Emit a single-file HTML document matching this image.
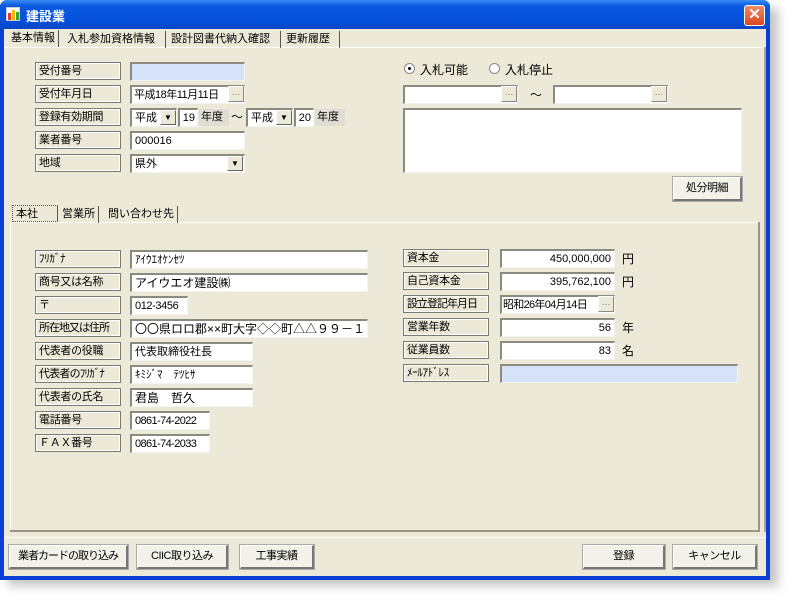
<!DOCTYPE html>
<html><head><meta charset="utf-8"><style>
*{box-sizing:border-box;margin:0;padding:0}
body{width:792px;height:600px;background:#fff;position:relative;overflow:hidden;font-family:"Liberation Sans","Noto Sans CJK JP",sans-serif;font-size:12px;color:#000}
.a{position:absolute;white-space:nowrap}
#shadow{left:8px;top:8px;width:770px;height:578px;background:#aaa;filter:blur(5px);opacity:.7}
#win{left:0;top:0;width:770px;height:580px;background:#0a3fd6;border-radius:7px 7px 0 0}
#title{left:0;top:0;width:770px;height:29px;border-radius:7px 7px 0 0;background:linear-gradient(#3d8cf5,#0a5ae0 20%,#0551dc 70%,#0a45c8)}
#client{left:4px;top:29px;width:762px;height:547px;background:#ece9d8}
.lab{position:absolute;width:86px;height:18px;border:1px solid #7a7a70;box-shadow:inset -1px -1px #fff,inset 1px 1px #fff;background:#ece9d8;padding:1px 3px;line-height:14px;font-size:11px;white-space:nowrap;overflow:hidden;letter-spacing:-0.3px}
.f{position:absolute;height:19px;background:#fff;border-top:2px solid #8a8a80;border-left:2px solid #8a8a80;border-right:1px solid #f4f3ee;border-bottom:1px solid #f4f3ee;padding:0 3px;line-height:16px;font-size:11px;white-space:nowrap;overflow:hidden}
.r{text-align:right}
.blue{background:#d6e2f7}
.dot{position:absolute;width:16px;height:16px;background:#ece9d8;border:1px solid #fff;border-right-color:#888;border-bottom-color:#888;font-size:9px;line-height:10px;text-align:center;color:#777}
.dd{position:absolute;width:16px;height:15px;background:#ece9d8;border:1px solid #fff;border-right-color:#666;border-bottom-color:#666;font-size:8px;text-align:center;line-height:13px}
.btn{position:absolute;height:24px;background:#f2f1ea;border:1px solid #fff;border-right:2px solid #777;border-bottom:2px solid #777;outline:1px solid #aaa;text-align:center;line-height:21px;font-size:11px;white-space:nowrap;overflow:hidden;letter-spacing:-0.5px}
.tab{position:absolute;height:17px;line-height:16px;font-size:11px;border-right:1px solid #555;padding:0 3px;white-space:nowrap}
</style></head><body>
<div class="a" id="shadow"></div>
<div class="a" id="win"></div>
<div class="a" id="title"></div>
<div class="a" style="left:6px;top:7px;width:14px;height:14px;background:#fff;border:1px solid #ccc">
<div class="a" style="left:1px;top:5px;width:3px;height:7px;background:#e33"></div>
<div class="a" style="left:5px;top:2px;width:3px;height:10px;background:#fb0"></div>
<div class="a" style="left:9px;top:4px;width:3px;height:8px;background:#3a3"></div></div>
<div class="a" style="left:26px;top:6px;color:#fff;font-weight:bold;font-size:13px">建設業</div>
<div class="a" style="left:744px;top:5px;width:21px;height:21px;border:1px solid #fff;border-radius:3px;background:linear-gradient(#f08a6a,#d8461f);color:#fff;font-weight:bold;font-size:15px;text-align:center;line-height:18px">✕</div>
<div class="a" id="client"></div>
<div class="a" style="left:4px;top:47px;width:762px;height:1px;background:#fff"></div>
<div class="tab a" style="left:8px;top:30px;background:#ece9d8">基本情報</div>
<div class="tab a" style="left:64px;top:31px;width:102px">入札参加資格情報</div>
<div class="tab a" style="left:168px;top:31px;width:113px">設計図書代納入確認</div>
<div class="tab a" style="left:283px;top:31px;width:57px">更新履歴</div>
<div class="a" style="left:764px;top:47px;width:2px;height:485px;background:#aca899"></div>
<div class="lab" style="left:35px;top:62px">受付番号</div>
<div class="f blue" style="left:130px;top:62px;width:115px"></div>
<div class="lab" style="left:35px;top:85px">受付年月日</div>
<div class="f" style="left:130px;top:85px;width:115px;padding-left:2px;letter-spacing:-0.5px">平成18年11月11日</div>
<div class="dot" style="left:228px;top:86px">…</div>
<div class="lab" style="left:35px;top:108px">登録有効期間</div>
<div class="f" style="left:130px;top:108px;width:47px">平成</div>
<div class="dd" style="left:160px;top:110px">▼</div>
<div class="f r" style="left:178px;top:108px;width:20px;padding:0 2px">19</div>
<div class="a" style="left:199px;top:109px;width:30px;height:17px;background:#e0ded4;line-height:16px;padding-left:2px;font-size:11px">年度</div>
<div class="a" style="left:231px;top:108px">〜</div>
<div class="f" style="left:246px;top:108px;width:47px">平成</div>
<div class="dd" style="left:276px;top:110px">▼</div>
<div class="f r" style="left:294px;top:108px;width:20px;padding:0 2px">20</div>
<div class="a" style="left:315px;top:109px;width:30px;height:17px;background:#e0ded4;line-height:16px;padding-left:2px;font-size:11px">年度</div>
<div class="lab" style="left:35px;top:131px">業者番号</div>
<div class="f" style="left:130px;top:131px;width:115px">000016</div>
<div class="lab" style="left:35px;top:154px">地域</div>
<div class="f" style="left:130px;top:154px;width:115px">県外</div>
<div class="dd" style="left:227px;top:156px">▼</div>
<div class="a" style="left:404px;top:63px;width:11px;height:11px;border-radius:50%;background:#fff;border:1px solid #888"><div class="a" style="left:3px;top:3px;width:3px;height:3px;border-radius:50%;background:#000"></div></div>
<div class="a" style="left:420px;top:61px">入札可能</div>
<div class="a" style="left:489px;top:63px;width:11px;height:11px;border-radius:50%;background:#fff;border:1px solid #888"></div>
<div class="a" style="left:505px;top:61px">入札停止</div>
<div class="f" style="left:403px;top:85px;width:115px"></div>
<div class="dot" style="left:501px;top:86px">…</div>
<div class="a" style="left:530px;top:86px">〜</div>
<div class="f" style="left:553px;top:85px;width:115px"></div>
<div class="dot" style="left:651px;top:86px">…</div>
<div class="f" style="left:403px;top:108px;width:339px;height:65px"></div>
<div class="btn" style="left:673px;top:177px;width:69px">処分明細</div>
<div class="a" style="left:10px;top:222px;width:750px;height:1px;background:#fff"></div>
<div class="a" style="left:10px;top:222px;width:1px;height:308px;background:#fff"></div>
<div class="a" style="left:10px;top:530px;width:750px;height:2px;background:#9a9788"></div>
<div class="a" style="left:758px;top:222px;width:2px;height:310px;background:#9a9788"></div>
<div class="tab a" style="left:12px;top:205px;width:46px;border:1px dotted #555;border-right:1px solid #555">本社</div>
<div class="tab a" style="left:59px;top:206px">営業所</div>
<div class="tab a" style="left:105px;top:206px">問い合わせ先</div>
<div class="lab" style="left:35px;top:250px">ﾌﾘｶﾞﾅ</div>
<div class="f" style="left:130px;top:250px;width:238px">ｱｲｳｴｵｹﾝｾﾂ</div>
<div class="lab" style="left:35px;top:273px">商号又は名称</div>
<div class="f" style="left:130px;top:273px;width:238px;font-size:12px">アイウエオ建設㈱</div>
<div class="lab" style="left:35px;top:296px">〒</div>
<div class="f" style="left:130px;top:296px;width:58px;letter-spacing:-0.4px">012-3456</div>
<div class="lab" style="left:35px;top:319px;letter-spacing:-1px">所在地又は住所</div>
<div class="f" style="left:130px;top:319px;width:238px;font-size:12px">〇〇県ロロ郡××町大字◇◇町△△９９－１</div>
<div class="lab" style="left:35px;top:342px">代表者の役職</div>
<div class="f" style="left:130px;top:342px;width:123px">代表取締役社長</div>
<div class="lab" style="left:35px;top:365px;letter-spacing:-0.8px">代表者のﾌﾘｶﾞﾅ</div>
<div class="f" style="left:130px;top:365px;width:123px">ｷﾐｼﾞﾏ　ﾃﾂﾋｻ</div>
<div class="lab" style="left:35px;top:388px">代表者の氏名</div>
<div class="f" style="left:130px;top:388px;width:123px;font-size:12px">君島　哲久</div>
<div class="lab" style="left:35px;top:411px">電話番号</div>
<div class="f" style="left:130px;top:411px;width:80px;letter-spacing:-0.6px">0861-74-2022</div>
<div class="lab" style="left:35px;top:434px">ＦＡＸ番号</div>
<div class="f" style="left:130px;top:434px;width:80px;letter-spacing:-0.6px">0861-74-2033</div>
<div class="lab" style="left:403px;top:249px">資本金</div>
<div class="f r" style="left:500px;top:249px;width:115px">450,000,000</div>
<div class="a" style="left:622px;top:250px">円</div>
<div class="lab" style="left:403px;top:272px">自己資本金</div>
<div class="f r" style="left:500px;top:272px;width:115px">395,762,100</div>
<div class="a" style="left:622px;top:273px">円</div>
<div class="lab" style="left:403px;top:295px;letter-spacing:-1px">設立登記年月日</div>
<div class="f" style="left:500px;top:295px;width:115px;padding-left:1px;letter-spacing:-0.7px">昭和26年04月14日</div>
<div class="dot" style="left:598px;top:296px">…</div>
<div class="lab" style="left:403px;top:318px">営業年数</div>
<div class="f r" style="left:500px;top:318px;width:115px">56</div>
<div class="a" style="left:622px;top:319px">年</div>
<div class="lab" style="left:403px;top:341px">従業員数</div>
<div class="f r" style="left:500px;top:341px;width:115px">83</div>
<div class="a" style="left:622px;top:342px">名</div>
<div class="lab" style="left:403px;top:364px">ﾒｰﾙｱﾄﾞﾚｽ</div>
<div class="f blue" style="left:500px;top:364px;width:238px"></div>
<div class="a" style="left:4px;top:537px;width:762px;height:1px;background:#fff"></div>
<div class="btn" style="left:9px;top:545px;width:119px;letter-spacing:-1px">業者カードの取り込み</div>
<div class="btn" style="left:137px;top:545px;width:91px">CIIC取り込み</div>
<div class="btn" style="left:240px;top:545px;width:74px">工事実績</div>
<div class="btn" style="left:583px;top:545px;width:82px">登録</div>
<div class="btn" style="left:673px;top:545px;width:84px">キャンセル</div>
</body></html>
